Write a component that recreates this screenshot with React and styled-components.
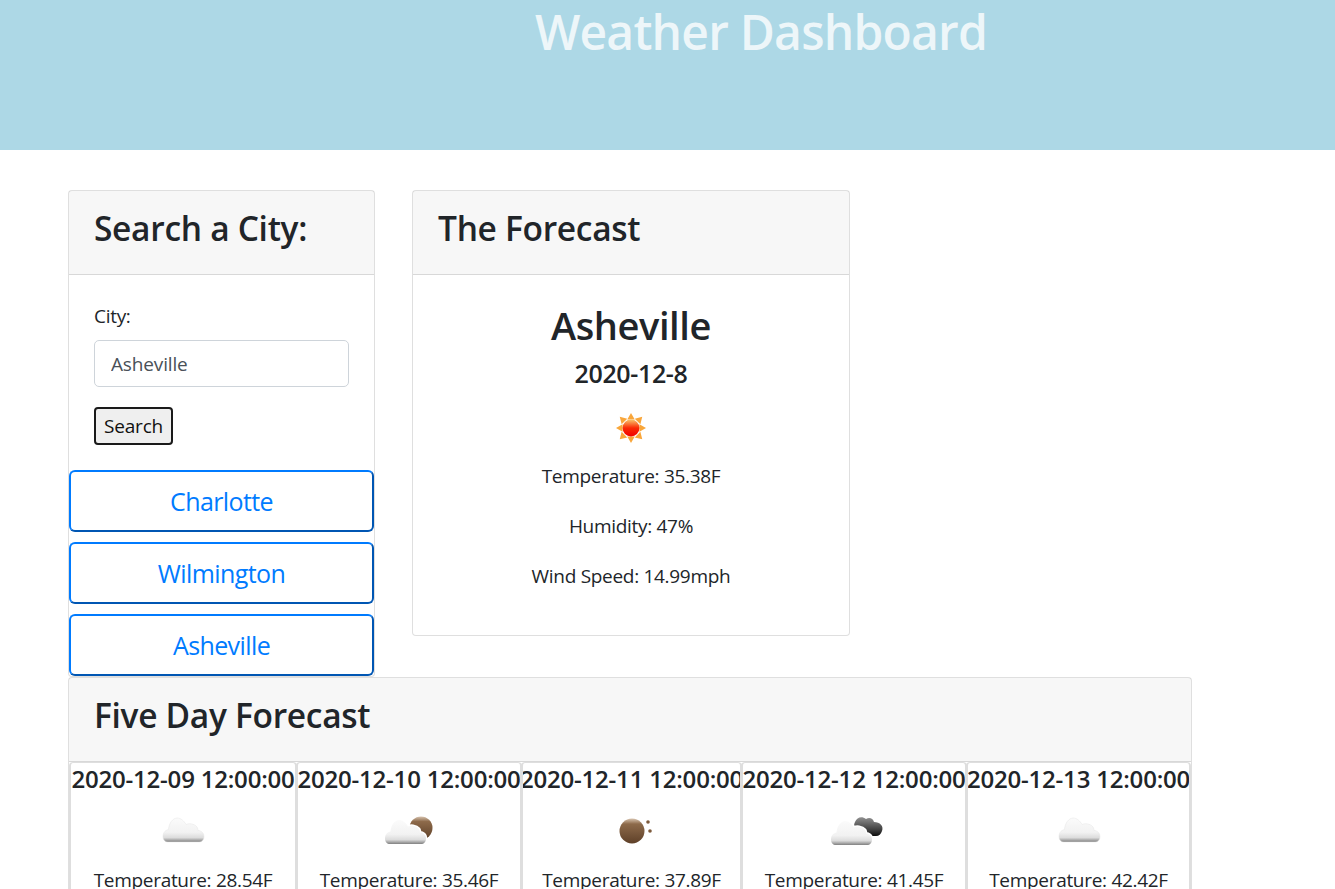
import styled, { createGlobalStyle } from 'styled-components'

const GlobalStyle = createGlobalStyle`
  * { box-sizing: border-box; }
  html, body {
    margin: 0;
    height: 889px;
    overflow: hidden;
    background: #fff;
    color: #212529;
    font-family: "Open Sans", "Noto Sans", sans-serif;
    font-size: 16px;
    letter-spacing: -0.3px;
  }
`

const Banner = styled.header`
  height: 150px;
  background: lightblue;
  text-align: center;
  padding-left: 187px;
`

const BannerTitle = styled.h1`
  margin: 0;
  font-size: 48px;
  font-weight: 600;
  line-height: 64px;
  letter-spacing: -0.8px;
  color: rgba(255, 255, 255, 0.78);
`

const Main = styled.main`
  width: 1124px;
  margin-left: 68px;
  padding-top: 40px;
`

const TopRow = styled.div`
  display: flex;
  align-items: flex-start;
  gap: 37px;
`

const Card = styled.section`
  width: ${(props) => props.width}px;
  height: ${(props) => (props.height ? `${props.height}px` : 'auto')};
  border: 1px solid rgba(0, 0, 0, 0.125);
  border-radius: 4px;
  background: #fff;
`

const CardHeader = styled.div`
  height: 84px;
  padding: 0 25px 9px;
  display: flex;
  align-items: center;
  background: rgba(0, 0, 0, 0.03);
  border-bottom: 1px solid rgba(0, 0, 0, 0.125);
`

const CardTitle = styled.h3`
  margin: 0;
  font-size: 33.5px;
  font-weight: 600;
  letter-spacing: -0.3px;
  white-space: nowrap;
`

const SearchForm = styled.form`
  padding: 28px 25px 25px;
  display: flex;
  flex-direction: column;
  align-items: flex-start;
`

const FieldLabel = styled.label`
  font-size: 19px;
  line-height: 26px;
  margin-bottom: 11px;
`

const CityInput = styled.input`
  width: 255px;
  height: 47px;
  padding: 0 16px;
  border: 1px solid #ced4da;
  border-radius: 5px;
  font: inherit;
  font-size: 19px;
  letter-spacing: -0.15px;
  color: #495057;
  margin-bottom: 20px;
`

const SearchButton = styled.button`
  height: 38px;
  width: 79px;
  padding: 0;
  border: 2px solid #1a1a1a;
  border-radius: 4px;
  background: #efefef;
  color: #111;
  font: inherit;
  font-size: 19px;
  letter-spacing: -0.2px;
`

const CityList = styled.div`
  display: flex;
  flex-direction: column;
  gap: 10px;
`

const CityButton = styled.div`
  height: 62px;
  display: flex;
  align-items: center;
  justify-content: center;
  border: 2px solid;
  border-color: #007bff #0056b3 #0056b3 #007bff;
  border-radius: 6px;
  background: #fff;
  color: #007bff;
  font-size: 25px;
  letter-spacing: -0.6px;
`

const ForecastBody = styled.div`
  padding: 21px 25px 0;
  display: flex;
  flex-direction: column;
  align-items: center;
`

const CityName = styled.h2`
  margin: 0;
  font-size: 38px;
  font-weight: 600;
  line-height: 58px;
  letter-spacing: -0.4px;
`

const DateLine = styled.h4`
  margin: 1px 0 12px;
  font-size: 25px;
  font-weight: 600;
  line-height: 36px;
  letter-spacing: -0.35px;
`

const WeatherIcon = styled.svg`
  width: ${(props) => props.size}px;
  height: ${(props) => props.size}px;
  display: block;
  flex: none;
`

const IconSlot = styled.div`
  height: 50px;
  display: flex;
  align-items: center;
  justify-content: center;
  flex: none;
`

const Stat = styled.p`
  margin: 0 0 24px;
  font-size: 19px;
  line-height: 26px;
  letter-spacing: -0.3px;
  white-space: nowrap;
`

const StatList = styled.div`
  margin-top: 10px;
  text-align: center;
`

const DayGrid = styled.div`
  display: grid;
  grid-template-columns: 228px 225px 220px 225px 224px;
`

const DayCard = styled.div`
  border: 2px solid #dedede;
  border-top-width: 1px;
  border-radius: 4px 4px 0 0;
  margin-left: -1px;
  height: 300px;
  display: flex;
  flex-direction: column;
  align-items: center;
  overflow: hidden;
  &:first-child { margin-left: 0; }
`

const DayDate = styled.h5`
  margin: 0 0 9px;
  font-size: 24px;
  font-weight: 600;
  line-height: 32px;
  letter-spacing: -0.2px;
  white-space: nowrap;
`

const DayStat = styled(Stat)`
  margin-top: 13px;
`

const Gradients = () => (
  <svg width="0" height="0" style={{ position: 'absolute' }}>
    <defs>
      <linearGradient id="sunFill" x1="0" y1="0" x2="0" y2="1">
        <stop offset="0" stopColor="#f9c56a" />
        <stop offset="0.5" stopColor="#fa2a05" />
        <stop offset="1" stopColor="#f00000" />
      </linearGradient>
      <linearGradient id="cloudFill" x1="0" y1="0" x2="0" y2="1">
        <stop offset="0" stopColor="#fbfbfb" />
        <stop offset="0.6" stopColor="#f2f2f2" />
        <stop offset="0.82" stopColor="#dcdcdc" />
        <stop offset="1" stopColor="#808080" />
      </linearGradient>
      <linearGradient id="moonFill" x1="0" y1="0" x2="0" y2="1">
        <stop offset="0" stopColor="#d8c4b0" />
        <stop offset="0.22" stopColor="#8d6a4a" />
        <stop offset="1" stopColor="#5e4028" />
      </linearGradient>
      <linearGradient id="darkFill" x1="0" y1="0" x2="0" y2="1">
        <stop offset="0" stopColor="#909090" />
        <stop offset="0.7" stopColor="#3a3a3a" />
        <stop offset="1" stopColor="#0c0c0c" />
      </linearGradient>
    </defs>
  </svg>
)

// cloud outline drawn in a 41x24 box
const cloudPath = 'M5 24 C2 24 0 22 0 18.5 C0 14 3 12 5.5 11.5 C6 5 10 0 14 0 C18 0 21 3 23 6.5 C25 5.5 31 5 34 9 C35 11 35 12 35 12.5 C38 12.5 41 15 41 18.5 C41 22 39 24 36 24 Z'

const SunIcon = () => (
  <WeatherIcon size={30} viewBox="0 0 32 32">
    <g fill="#f9a63a">
      <polygon points="16,0 20,7 12,7" />
      <polygon points="16,32 20,25 12,25" />
      <polygon points="0,16 7,12 7,20" />
      <polygon points="32,16 25,12 25,20" />
      <polygon points="4,4 12,6 6,12" />
      <polygon points="28,4 26,12 20,6" />
      <polygon points="4,28 6,20 12,26" />
      <polygon points="28,28 20,26 26,20" />
    </g>
    <circle cx="16" cy="16" r="9" fill="url(#sunFill)" />
  </WeatherIcon>
)

const CloudIcon = () => (
  <WeatherIcon size={50} viewBox="0 0 50 50">
    <path d={cloudPath} fill="url(#cloudFill)" stroke="#e4e4e4" strokeWidth="0.5" transform="translate(5 14)" />
  </WeatherIcon>
)

const CloudMoonIcon = () => (
  <WeatherIcon size={50} viewBox="0 0 50 50">
    <circle cx="37" cy="24" r="11.5" fill="url(#moonFill)" />
    <path d={cloudPath} fill="url(#cloudFill)" stroke="#fff" strokeWidth="3" paintOrder="stroke" transform="translate(1 16)" />
  </WeatherIcon>
)

const MoonIcon = () => (
  <WeatherIcon size={50} viewBox="0 0 50 50">
    <circle cx="25" cy="27" r="12.5" fill="url(#moonFill)" />
    <circle cx="41" cy="18" r="1.8" fill="#7d5a3c" />
    <circle cx="43" cy="27" r="1.8" fill="#7d5a3c" />
  </WeatherIcon>
)

const DarkCloudIcon = () => (
  <WeatherIcon size={60} viewBox="0 0 60 60">
    <path d="M31 23 C33 18 38 17 42 20 C45 18 49 19 50 23 C56 23 60 27 58 32 C57 35 55 37 52 37 L34 37 C30 33 29 27 31 23 Z" fill="url(#darkFill)" />
    <path d={cloudPath} fill="url(#cloudFill)" stroke="#fff" strokeWidth="3" paintOrder="stroke" transform="translate(7 22)" />
  </WeatherIcon>
)

const days = [
  { date: '2020-12-09 12:00:00', temp: '28.54F', Icon: CloudIcon },
  { date: '2020-12-10 12:00:00', temp: '35.46F', Icon: CloudMoonIcon },
  { date: '2020-12-11 12:00:00', temp: '37.89F', Icon: MoonIcon },
  { date: '2020-12-12 12:00:00', temp: '41.45F', Icon: DarkCloudIcon },
  { date: '2020-12-13 12:00:00', temp: '42.42F', Icon: CloudIcon },
]

const App = () => {
  return (
    <>
      <GlobalStyle />
      <Gradients />
      <Banner>
        <BannerTitle>Weather Dashboard</BannerTitle>
      </Banner>
      <Main>
        <TopRow>
          <Card width={307}>
            <CardHeader>
              <CardTitle>Search a City:</CardTitle>
            </CardHeader>
            <SearchForm>
              <FieldLabel>City:</FieldLabel>
              <CityInput defaultValue="Asheville" />
              <SearchButton type="button">Search</SearchButton>
            </SearchForm>
            <CityList>
              <CityButton>Charlotte</CityButton>
              <CityButton>Wilmington</CityButton>
              <CityButton>Asheville</CityButton>
            </CityList>
          </Card>
          <Card width={438} height={446}>
            <CardHeader>
              <CardTitle>The Forecast</CardTitle>
            </CardHeader>
            <ForecastBody>
              <CityName>Asheville</CityName>
              <DateLine>2020-12-8</DateLine>
              <IconSlot>
                <SunIcon />
              </IconSlot>
              <StatList>
                <Stat>Temperature: 35.38F</Stat>
                <Stat>Humidity: 47%</Stat>
                <Stat>Wind Speed: 14.99mph</Stat>
              </StatList>
            </ForecastBody>
          </Card>
        </TopRow>
        <Card width={1124}>
          <CardHeader>
            <CardTitle>Five Day Forecast</CardTitle>
          </CardHeader>
          <DayGrid>
            {days.map(({ date, temp, Icon }) => (
              <DayCard key={date}>
                <DayDate>{date}</DayDate>
                <IconSlot>
                  <Icon />
                </IconSlot>
                <DayStat>Temperature: {temp}</DayStat>
              </DayCard>
            ))}
          </DayGrid>
        </Card>
      </Main>
    </>
  )
}

export default App
